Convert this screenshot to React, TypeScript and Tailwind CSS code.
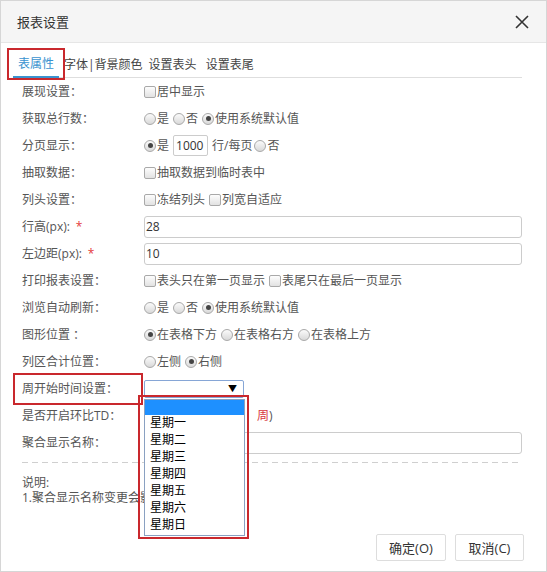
import React from "react";

const Checkbox: React.FC = () => (
  <span className="inline-block shrink-0 w-[12px] h-[12px] border border-[#a9a9a9] rounded-[2px] bg-gradient-to-b from-[#fdfdfd] to-[#e2e2e2]" />
);

const Radio: React.FC<{ checked?: boolean }> = ({ checked }) => (
  <span className="flex shrink-0 items-center justify-center w-[12px] h-[12px] rounded-full border border-[#a9a9a9] bg-gradient-to-b from-[#fbfbfb] to-[#d9d9d9]">
    {checked && <span className="w-[5px] h-[5px] rounded-full bg-[#444]" />}
  </span>
);

const Opt: React.FC<{ type: "radio" | "check"; checked?: boolean; text: string }> = ({ type, checked, text }) => (
  <span className="flex items-center mr-[4px]">
    {type === "radio" ? <Radio checked={checked} /> : <Checkbox />}
    <span className="ml-[1px]">{text}</span>
  </span>
);

const Row: React.FC<{ label: React.ReactNode; required?: boolean; children?: React.ReactNode }> = ({
  label,
  required,
  children,
}) => (
  <div className="flex items-center h-[27px]">
    <div className="relative w-[122px] shrink-0 text-[#555]">
      {label}
      {required && <span className="ml-[6px] text-[#e4393c]">*</span>}
    </div>
    <div className="flex items-center flex-1 min-w-0 text-[#555]">{children}</div>
  </div>
);

const weekDays = ["星期一", "星期二", "星期三", "星期四", "星期五", "星期六", "星期日"];

const App: React.FC = () => {
  return (
    <div className="w-[547px] h-[572px] flex flex-col bg-white border border-[#d6d6d6] text-[12px] leading-[14px] font-['Open_Sans','Noto_Sans_CJK_SC',sans-serif]">
      {/* header */}
      <div className="h-[42px] shrink-0 flex items-center justify-between pl-[16px] pr-[17px] bg-[#f5f5f5] border-b border-[#e6e6e6]">
        <span className="text-[13px] text-[#333]">报表设置</span>
        <svg width="14" height="14" viewBox="0 0 14 14">
          <path d="M1 1 L13 13 M13 1 L1 13" stroke="#333" strokeWidth="1.6" />
        </svg>
      </div>

      {/* body */}
      <div className="flex-1 flex flex-col">
        <div className="flex ml-[12px] mr-[24px] mt-[9px] border-b border-[#dedede] h-[26px]">
          <div className="relative px-[5px] h-[26px] flex items-center -mb-px border-b-2 border-[#3a93cf] text-[#3a93cf]">
            表属性
            <span className="absolute -left-[6px] -right-[6px] -top-[4px] bottom-[-4px] border-2 border-[#c9282d]" />
          </div>
          <div className="pl-[5px] h-[26px] flex items-center text-[#444]">字体|背景颜色</div>
          <div className="pl-[6px] h-[26px] flex items-center text-[#444]">设置表头</div>
          <div className="pl-[9px] h-[26px] flex items-center text-[#444]">设置表尾</div>
        </div>

        <div className="pl-[21px] pr-[24px]">
          <Row label="展现设置：">
            <Opt type="check" text="居中显示" />
          </Row>
          <Row label="获取总行数：">
            <Opt type="radio" text="是" />
            <Opt type="radio" text="否" />
            <Opt type="radio" checked text="使用系统默认值" />
          </Row>
          <Row label="分页显示：">
            <Opt type="radio" checked text="是" />
            <span className="w-[35px] h-[21px] border border-[#ccc] rounded-[2px] flex items-center pl-[2px] text-[#333] mr-[4px]">
              1000
            </span>
            <span className="mr-[2px]">行/每页</span>
            <Opt type="radio" text="否" />
          </Row>
          <Row label="抽取数据：">
            <Opt type="check" text="抽取数据到临时表中" />
          </Row>
          <Row label="列头设置：">
            <Opt type="check" text="冻结列头" />
            <Opt type="check" text="列宽自适应" />
          </Row>
          <Row label="行高(px):" required>
            <div className="w-full h-[22px] border border-[#ccc] rounded-[3px] flex items-center pl-[1px] text-[#333]">28</div>
          </Row>
          <Row label="左边距(px):" required>
            <div className="w-full h-[22px] border border-[#ccc] rounded-[3px] flex items-center pl-[1px] text-[#333]">10</div>
          </Row>
          <Row label="打印报表设置：">
            <Opt type="check" text="表头只在第一页显示" />
            <Opt type="check" text="表尾只在最后一页显示" />
          </Row>
          <Row label="浏览自动刷新：">
            <Opt type="radio" text="是" />
            <Opt type="radio" text="否" />
            <Opt type="radio" checked text="使用系统默认值" />
          </Row>
          <Row label="图形位置 ：">
            <Opt type="radio" checked text="在表格下方" />
            <Opt type="radio" text="在表格右方" />
            <Opt type="radio" text="在表格上方" />
          </Row>
          <Row label="列区合计位置：">
            <Opt type="radio" text="左侧" />
            <Opt type="radio" checked text="右侧" />
          </Row>
          <Row
            label={
              <>
                周开始时间设置：
                <span className="absolute -left-[9px] right-[1px] -top-[9px] -bottom-[9px] border-2 border-[#c9282d]" />
              </>
            }
          >
            <div className="relative z-10">
              <div className="w-[100px] h-[18px] border border-[#86a6d6] rounded-[2px] bg-white flex items-center justify-end pr-[6px]">
                <span className="text-[9px] leading-none text-black">▼</span>
              </div>
              <div className="absolute left-0 top-[19px] w-[101px] bg-white border border-[#8aa1c2]">
                <div className="h-[15px] bg-[#1e90ff]" />
                {weekDays.map((d) => (
                  <div key={d} className="h-[17px] flex items-center pl-[5px] text-black text-[12px]">
                    {d}
                  </div>
                ))}
                <div className="h-[1px]" />
                <span className="absolute -left-[7px] -right-[5px] -top-[5px] -bottom-[4px] border-2 border-[#c9282d]" />
              </div>
            </div>
          </Row>
          <Row label="是否开启环比TD：">
            <span className="inline-block w-[113px]" />
            <span className="text-[#d9363e]">周</span>
            <span className="text-[#555]">)</span>
          </Row>
          <Row label="聚合显示名称：">
            <div className="w-full h-[22px] border border-[#ccc] rounded-[3px]" />
          </Row>

          <div className="mt-[6px] h-px bg-[repeating-linear-gradient(90deg,#cfcfcf_0_6px,transparent_6px_10px)]" />
          <div className="mt-[12px] text-[#555] leading-[15px]">
            <div>说明:</div>
            <div>1.聚合显示名称变更会影响</div>
          </div>
        </div>
      </div>

      {/* footer */}
      <div className="shrink-0 flex justify-end gap-[9px] pr-[22px] pb-[10px]">
        <button className="w-[70px] h-[27px] border border-[#ddd] rounded-[2px] bg-white text-[13px] text-[#333]">确定(O)</button>
        <button className="w-[69px] h-[27px] border border-[#ddd] rounded-[2px] bg-white text-[13px] text-[#333]">取消(C)</button>
      </div>
    </div>
  );
};

export default App;
